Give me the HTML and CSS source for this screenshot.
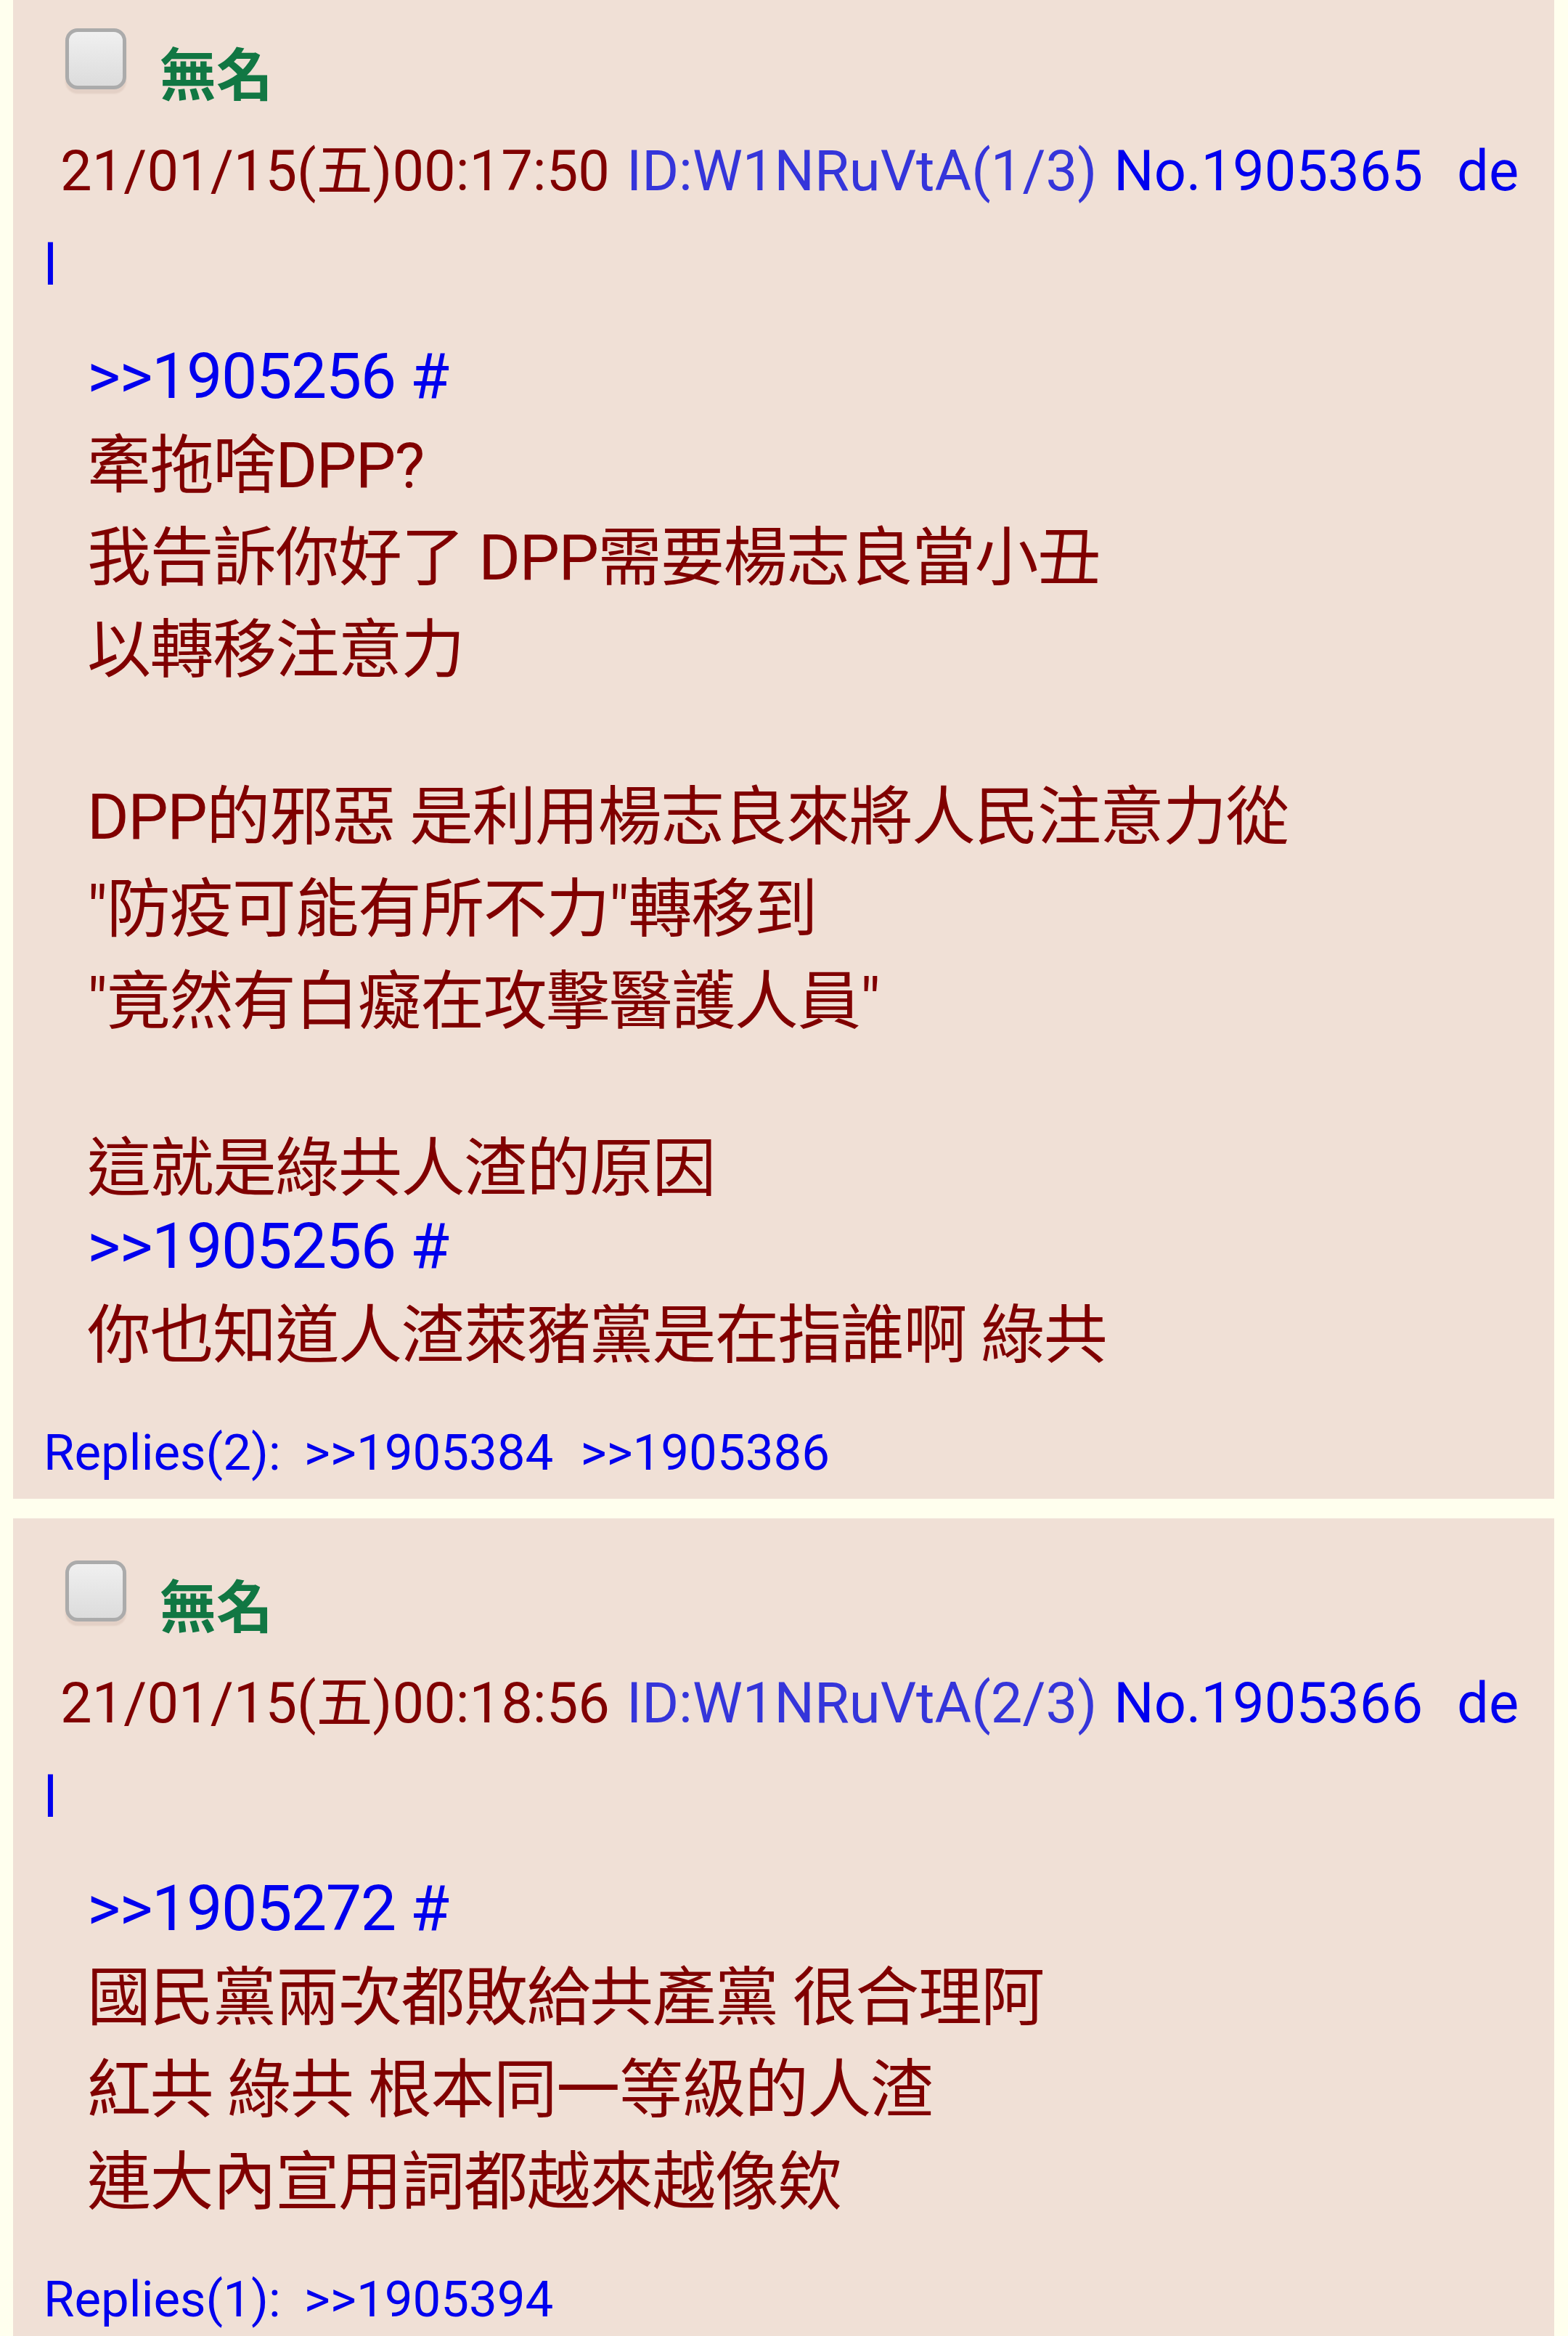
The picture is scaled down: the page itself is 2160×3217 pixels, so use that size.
FILE: index.html
```html
<html>
<head>
<meta charset="utf-8">
<link rel="stylesheet" href="styles.css">
</head>
<body>
<div class="thread">

    <div class="post">
        <div class="namerow"><input type="checkbox" class="chk"><span class="name">無名</span></div>
        <div class="info"><span class="now">21/01/15(五)00:17:50</span><span class="uid">ID:W1NRuVtA(1/3)</span><a class="no">No.1905365</a><a class="del">del</a></div>
        <blockquote class="com">
            <a class="qlink">&gt;&gt;1905256 #</a><br>
            牽拖啥DPP?<br>
            我告訴你好了 DPP需要楊志良當小丑<br>
            以轉移注意力<br>
            <br>
            DPP的邪惡 是利用楊志良來將人民注意力從<br>
            "防疫可能有所不力"轉移到<br>
            "竟然有白癡在攻擊醫護人員"<br>
            <br>
            這就是綠共人渣的原因<br>
            <a class="qlink">&gt;&gt;1905256 #</a><br>
            你也知道人渣萊豬黨是在指誰啊 綠共
        </blockquote>
        <div class="replies">Replies(2):<a>&gt;&gt;1905384</a><a>&gt;&gt;1905386</a></div>
    </div>

    <div class="post">
        <div class="namerow"><input type="checkbox" class="chk"><span class="name">無名</span></div>
        <div class="info"><span class="now">21/01/15(五)00:18:56</span><span class="uid">ID:W1NRuVtA(2/3)</span><a class="no">No.1905366</a><a class="del">del</a></div>
        <blockquote class="com">
            <a class="qlink">&gt;&gt;1905272 #</a><br>
            國民黨兩次都敗給共產黨 很合理阿<br>
            紅共 綠共 根本同一等級的人渣<br>
            連大內宣用詞都越來越像欸
        </blockquote>
        <div class="replies">Replies(1):<a>&gt;&gt;1905394</a></div>
    </div>

</div>
</body>
</html>
```

FILE: styles.css
```css
html
{
    background: #ffffee;
}

body
{
    margin: 0;
    font-family: Roboto, "Noto Sans CJK TC", sans-serif;
    color: #800000;
}

a
{
    text-decoration: none;
    color: #0000ee;
}

.thread
{
    margin-top: -19px;
}

.post
{
    background: #f0e0d6;
    margin: 0 19px 27px 18px;
    padding: 58px 42px 23px 42px;
}

/* name row: checkbox + poster name */
.namerow
{
    font-size: 78px;
    line-height: 130px;
}

.chk
{
    -webkit-appearance: none;
    appearance: none;
    display: inline-block;
    box-sizing: border-box;
    width: 84px;
    height: 84px;
    margin: 0 46px 9px 30px;
    vertical-align: baseline;
    border: 5px solid #ababab;
    border-radius: 17px;
    background: linear-gradient(#f0f0f0, #dcdcdc);
    box-shadow: 0 6px 2px rgba(140, 100, 80, 0.12);
}

.name
{
    color: #117743;
    font-weight: bold;
}

/* date, id, number, del */
.info
{
    font-size: 77.7px;
    line-height: 130px;
    text-indent: 23px;
    word-break: break-all;
}

.uid
{
    color: #3535da;
    margin-left: 23px;
}

.no
{
    margin-left: 23px;
}

.del
{
    margin-left: 47px;
}

.com
{
    font-size: 88px;
    letter-spacing: -1.5px;
    margin: 35px 0 66px 60px;
}

.qlink
{
    color: #0000ee;
}

.replies
{
    font-size: 69px;
    color: #0000ee;
}

.replies a
{
    margin-left: 32px;
}

.replies a + a
{
    margin-left: 37px;
}
```
